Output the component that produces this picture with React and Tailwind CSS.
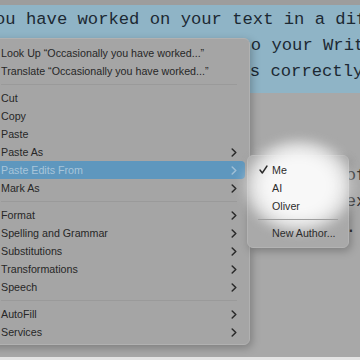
import React from "react";

const mono = { fontFamily: '"Liberation Mono", "DejaVu Sans Mono", monospace' };
const sans = { fontFamily: '"Liberation Sans", Arial, sans-serif' };

function Chevron({ light }) {
  return (
    <svg width="6" height="9" viewBox="0 0 6 9" className="shrink-0">
      <path
        d="M1.2 1 L4.8 4.5 L1.2 8"
        fill="none"
        stroke={light ? "#9fbfd6" : "#2a2a2a"}
        strokeWidth="1.5"
        strokeLinecap="round"
        strokeLinejoin="round"
      />
    </svg>
  );
}

function Row({ label, sub, active }) {
  return (
    <div
      className={
        "flex items-center justify-between h-[18px] pl-[10px] pr-[8px] rounded-[4px] " +
        (active ? "bg-[#5e97be] text-[#a8c5da]" : "text-[#272727]")
      }
    >
      <span className="whitespace-pre">{label}</span>
      {sub ? <Chevron light={active} /> : null}
    </div>
  );
}

function Sep() {
  return (
    <div className="h-[9px] flex items-center pl-[10px] pr-[8px]">
      <div className="h-px w-full bg-[#9a9a9a]" />
    </div>
  );
}

function SubRow({ label, checked }) {
  return (
    <div className="relative flex items-center h-[18px] pl-[24px] text-[#2c2c2c]">
      {checked ? (
        <svg width="9" height="9" viewBox="0 0 9 9" className="absolute left-[11px] top-[4px]">
          <path d="M1 5 L3.3 8 L8 1" fill="none" stroke="#2a2a2a" strokeWidth="1.4" strokeLinecap="round" strokeLinejoin="round" />
        </svg>
      ) : null}
      <span className="whitespace-pre">{label}</span>
    </div>
  );
}

export default function App() {
  return (
    <div className="relative w-[360px] h-[360px] overflow-hidden bg-[#a8a8a8]">
      {/* editor text */}
      <div className="flex flex-col text-[17.2px]" style={mono}>
        <div className="h-[5px] bg-[#9d9d9d]" />
        <div className="bg-[#8fb4c6] pt-[2px] pb-[8px] text-[#1c2933]">
          <div className="h-[26px] leading-[26px] whitespace-pre ml-[-5px]">ou have worked on your text in a different</div>
          <div className="h-[26px] leading-[26px] whitespace-pre ml-[-7px]">fferent app, and put it to your Writer</div>
          <div className="h-[26px] leading-[26px] whitespace-pre ml-[-8px]">project, ensuring it shows correctly</div>
        </div>
        <div className="mt-[70px] text-[#2e2e2e]">
          <div className="h-[26px] leading-[26px] whitespace-pre ml-[-5px]">each change is attributed to some of</div>
          <div className="h-[26px] leading-[26px] whitespace-pre ml-[-5px]">your authors, and the app records exactly</div>
          <div className="h-[26px] leading-[26px] whitespace-pre ml-[-5px]">who wrote which part of the scenes.</div>
        </div>
      </div>
      <div className="absolute left-0 right-0 bottom-0 h-[3px] bg-[#e4e4e4]" />

      {/* context menu */}
      <div
        className="absolute left-[-14px] top-[38px] w-[264px] pt-[5px] pb-[3px] px-[4px] bg-[#a5a5a5] border border-[#b1b1b1] rounded-[6px] shadow-[2px_3px_8px_rgba(0,0,0,0.25)] text-[10.7px]"
        style={sans}
      >
        <Row label={"Look Up \u201COccasionally you have worked...\u201D"} />
        <Row label={"Translate \u201COccasionally you have worked...\u201D"} />
        <Sep />
        <Row label="Cut" />
        <Row label="Copy" />
        <Row label="Paste" />
        <Row label="Paste As" sub />
        <Row label="Paste Edits From" sub active />
        <Row label="Mark As" sub />
        <Sep />
        <Row label="Format" sub />
        <Row label="Spelling and Grammar" sub />
        <Row label="Substitutions" sub />
        <Row label="Transformations" sub />
        <Row label="Speech" sub />
        <Sep />
        <Row label="AutoFill" sub />
        <Row label="Services" sub />
      </div>

      {/* submenu */}
      <div
        className="absolute left-[247px] top-[155px] w-[102px] pt-[5px] pb-[5px] bg-[#a9a9a9] border border-[#b3b3b3] rounded-[6px] shadow-[2px_3px_8px_rgba(0,0,0,0.25)] text-[10.7px]"
        style={sans}
      >
        <div className="absolute left-[-8px] top-[-20px] w-[118px] h-[100px] blur-[5px] bg-[radial-gradient(closest-side,#f8f8f8_55%,rgba(246,246,246,0.75)_78%,rgba(246,246,246,0)_100%)]" />
        <div className="relative">
          <SubRow label="Me" checked />
          <SubRow label="AI" />
          <SubRow label="Oliver" />
          <div className="h-[9px] flex items-center px-[10px]">
            <div className="h-px w-full bg-[#9e9e9e]" />
          </div>
          <SubRow label="New Author..." />
        </div>
      </div>
    </div>
  );
}
